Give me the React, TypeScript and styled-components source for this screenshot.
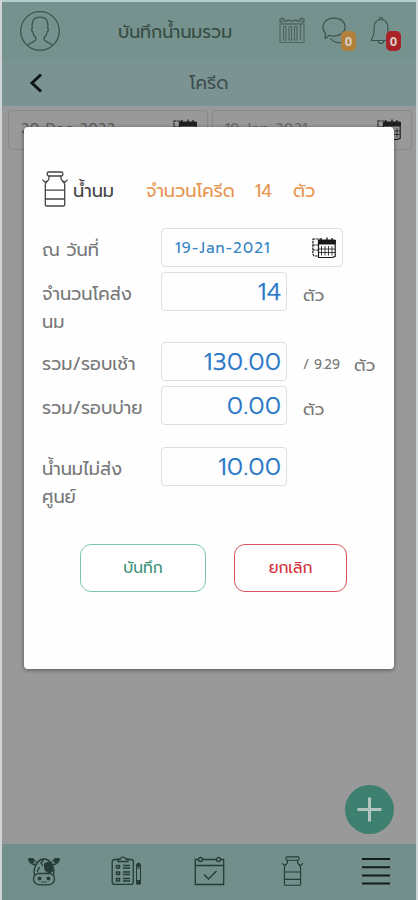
import React from "react";
import styled, { createGlobalStyle } from "styled-components";

const Global = createGlobalStyle`
  * { box-sizing: border-box; }
  html, body { margin: 0; padding: 0; background: #d9dedd; }
  body { font-family: "Prompt", "Kanit", "Noto Sans Thai", "Noto Sans", sans-serif; }
  button { font-family: inherit; }
`;

const Screen = styled.div`
  position: relative;
  width: 418px;
  height: 900px;
  overflow: hidden;
  display: flex;
  flex-direction: column;
  border: solid #cfd5d4;
  border-width: 0 2px;
  background: #999;
`;
const TopBar = styled.header`
  height: 60px;
  flex: none;
  border-top: 2px solid #b4cdca;
  background: #76928e;
  display: flex;
  align-items: center;
  padding: 0 24px 0 17px;
  color: #3d5350;
`;
const TopTitle = styled.div`
  flex: 1;
  padding: 2px 0 0 57px;
`;
const TopIcons = styled.div`
  display: flex;
  align-items: center;
  padding-bottom: 1px;
`;
const IconWrap = styled.div<{ $gap: number }>`
  position: relative;
  display: flex;
  margin-left: ${(p) => p.$gap}px;
`;
const Badge = styled.span<{ $bg: string; $right: number }>`
  position: absolute;
  right: ${(p) => p.$right}px;
  bottom: -6px;
  width: 15px;
  height: 20px;
  border-radius: 5px;
  background: ${(p) => p.$bg};
  color: #d9cdc2;
  font: 700 13px/20px "Open Sans", sans-serif;
  text-align: center;
`;
const SubBar = styled.div`
  height: 46px;
  flex: none;
  background: #7c9393;
  display: grid;
  grid-template-columns: 68px 1fr 68px;
  align-items: center;
  justify-items: center;
`;
const Filters = styled.div`
  display: flex;
  gap: 4px;
  padding: 4px 4px 0 6px;
  height: 48px;
`;
const FilterBox = styled.div`
  flex: 1;
  height: 40px;
  border: 1px solid #898989;
  border-radius: 4px;
  display: flex;
  justify-content: space-between;
  align-items: flex-start;
  padding: 8px 10px 0 12px;
`;
const Main = styled.main`
  flex: 1;
  display: flex;
  flex-direction: column;
  justify-content: space-between;
`;
const AddButton = styled.button`
  align-self: flex-end;
  margin: 0 22px 10px 0;
  width: 49px;
  height: 49px;
  border: 0;
  padding: 0;
  border-radius: 50%;
  background: #3d8070;
  display: grid;
  place-items: center;
`;
const BottomNav = styled.nav`
  height: 56px;
  flex: none;
  background: #738f8b;
  display: grid;
  grid-template-columns: repeat(5, 83px);
  align-items: center;
  justify-items: center;
  padding-bottom: 2px;
  color: #243b38;
`;
const Modal = styled.section`
  position: absolute;
  left: 22px;
  top: 127px;
  width: 370px;
  height: 542px;
  border-radius: 4px;
  background: #fefefe;
  box-shadow: 0 1px 4px rgba(0, 0, 0, 0.45);
  padding: 40px 14px 0 18px;
`;
const Heading = styled.div`
  display: flex;
  align-items: center;
  height: 48px;
  margin-bottom: 13px;
  color: #444;
`;
const CanSlot = styled.div`
  display: flex;
  padding-bottom: 4px;
`;
const HeadingText = styled.div<{ $left: number }>`
  margin-left: ${(p) => p.$left}px;
  padding-top: 2px;
`;
const Row = styled.div<{ $h: number }>`
  display: grid;
  grid-template-columns: 119px auto 1fr;
  align-items: start;
  height: ${(p) => p.$h}px;
`;
const Label = styled.div`
  padding-top: 9px;
`;
const Field = styled.div<{ $wide?: boolean }>`
  width: ${(p) => (p.$wide ? 182 : 126)}px;
  height: 39px;
  border: 1px solid #dedede;
  border-radius: 4px;
  display: flex;
  align-items: center;
  justify-content: ${(p) => (p.$wide ? "space-between" : "flex-end")};
  padding: ${(p) => (p.$wide ? "0 6px 0 13px" : "0 5px 0 0")};
`;
const Units = styled.div`
  display: flex;
  padding: 9px 0 0 16px;
`;
const PerHead = styled.div`
  width: 51px;
`;
const Text = styled.span<{ $size?: number; $color?: string; $ls?: number; $lh?: number; $weight?: number }>`
  display: block;
  white-space: pre;
  font-size: ${(p) => p.$size ?? 17.8}px;
  line-height: ${(p) => p.$lh ?? 28}px;
  color: ${(p) => p.$color ?? "#777"};
  letter-spacing: ${(p) => p.$ls ?? 0}px;
  font-weight: ${(p) => p.$weight ?? 400};
`;
const Amount = styled(Text).attrs({ $size: 24, $color: "#2877c7", $weight: 300 })`
  letter-spacing: 0.6px;
  margin-right: -0.6px;
  -webkit-text-stroke: 0.25px #2877c7;
`;
const Actions = styled.div`
  display: flex;
  gap: 28px;
  padding-left: 38px;
`;
const ActionButton = styled.button<{ $w: number; $line: string; $ink: string }>`
  width: ${(p) => p.$w}px;
  height: 48px;
  border: 1.5px solid ${(p) => p.$line};
  border-radius: 11px;
  background: #fff;
  color: ${(p) => p.$ink};
  font-size: 15.5px;
  font-weight: 400;
  padding: 0;
`;

const MilkCan = ({ w = 26, h = 36, sw = 1.3 }: { w?: number; h?: number; sw?: number }) => (
  <svg width={w} height={h} viewBox="0 0 26 36" fill="none" stroke="currentColor" strokeWidth={sw} strokeLinejoin="round" strokeLinecap="round">
    <rect x="5.2" y="1" width="15.6" height="4" rx="1.4" />
    <path d="M7 5v2.500c0 2.500-3.700 3-3.700 6V33.800c0 .8.4 1.200 1.200 1.200h17c.8 0 1.200-.4 1.200-1.200V13.500c0-3-3.700-3.500-3.700-6V5M3.300 19.200h19.400M3.300 28h19.400M5 10.200l-1.700.8C2 11 2 9.500.7 9M21 10.200l1.700.8c1.300 0 1.300-1.500 2.600-2" />
  </svg>
);

const Calendar = ({ color = "#181818", light = "#fff" }: { color?: string; light?: string }) => (
  <svg width="24" height="21" viewBox="0 0 24 21">
    <g stroke={color}>
      <path d="M1 2h7v17H2L.8 17zM1 8h6M1 13h6" fill="none" strokeWidth="1.2" strokeDasharray="2.5 .8" />
      <path d="M6.500 3.500h16.700v15.800l-3 1.200H6.500z" fill={light} strokeWidth="1.200" />
      <path d="M6.500 3h16.700v4H6.500z" fill={color} />
      <path d="M9 1v3M15 .5V4M20 1v3" strokeWidth="1.300" />
      <path d="M9.500 9v9.500M13 9v9.500M16.500 9v9.500M20 9v9.500M7 12h16M7 15.500h16" fill="none" strokeWidth=".8" />
    </g>
  </svg>
);

const BarCalendar = () => (
  <svg width="26" height="27" viewBox="0 0 26 27" fill="none" stroke="#50655f" strokeWidth="1.200" strokeLinejoin="round">
    <path d="M1 7v18.500h24V7" />
    <path d="M1.500 6.500L1 2.500 3.500 1l3 3.500L9.500 3l3.500 1.500L16.500 3l3 1.500 3-3.500L25 2.500l-.5 4M2 7h22M3.500 3.500v2M22.500 3.500v2" strokeWidth="1.700" />
    <path d="M4.500 9.500H7v13.500H4.500zM10 9.500h2.500v13.500H10zM15.500 9.500H18v13.500h-2.500zM21.500 8v15" />
  </svg>
);

const Person = () => (
  <svg width="42" height="42" viewBox="0 0 42 42" fill="none" stroke="currentColor" strokeWidth="1.3">
    <circle cx="21" cy="21" r="19.3" />
    <path d="M8.500 35.500c1.400-3.200 8.600-2.400 8.700-7.400-2-1.500-3-3.800-3.400-6.200-1.700-1.200-1.200-3.100-.5-3.700-.8-7 1.200-11 7.700-11s8.500 4 7.700 11c.7.6 1.200 2.500-.5 3.700-.4 2.400-1.400 4.700-3.400 6.200.1 5 7.300 4.200 8.700 7.400" />
  </svg>
);

const Chat = () => (
  <svg width="30" height="28" viewBox="0 0 30 28" fill="none" stroke="currentColor" strokeWidth="1.200" strokeLinejoin="round">
    <path d="M4.500 16.500C-1 10 3 1.200 12.800 1.200c7 0 11.400 4 11.400 9s-4.600 9-11.400 9c-1.800 0-3.400-.3-4.800-.9-1.200 1.700-2.700 2.600-4.400 2.800 1-1.200 1-2.600.9-4.600ZM9.500 21.500c2.500 4 8.500 5.200 12.500 3.500" />
  </svg>
);

const Bell = () => (
  <svg width="22" height="29" viewBox="0 0 24 29" preserveAspectRatio="none" fill="none" stroke="currentColor" strokeWidth="1.200" strokeLinejoin="round">
    <path d="M10 3.500a2 2 0 0 1 4 0M12 3.500c-5 0-7.500 3.500-7.500 8.500 0 6-1 9.500-3 11.500v1h21v-1c-2-2-3-5.500-3-11.500 0-5-2.500-8.500-7.500-8.500ZM9 24.500c0 4 6 4 6 0" />
  </svg>
);

const Cow = () => (
  <svg width="34" height="29" viewBox="0 0 34 29" fill="none" stroke="currentColor" strokeWidth="1.300" strokeLinejoin="round">
    <path d="M10 7C6 8.500 2.500 6.500 1.500 2c2.500-.8 6 .3 8 3.500M24 7c4 1.500 7.500-.5 8.500-5-2.500-.8-6 .3-8 3.500" />
    <path d="M2 2.300l4.500-.4L6 6zM32 2.300l-4.500-.4L28 6z" fill="currentColor" />
    <path d="M7.500 19c-.8-5-.3-9 2-12C11.500 3.500 14 2 17 2s5.500 1.500 7.500 5c2.300 3 2.800 7 2 12" />
    <path d="M17.500 7c3-2.500 6-1.500 7.500 1.500l.2 6-3.200 1.500-4-3.200z" fill="currentColor" />
    <path d="M17 2l-3 4 2 3M10 15l2.500-5" />
    <rect x="6.500" y="16.500" width="21" height="11.300" rx="5.600" />
    <circle cx="12.500" cy="21.500" r="1.300" fill="currentColor" />
    <circle cx="21.500" cy="21.500" r="1.300" fill="currentColor" />
    <path d="M14 25h6" strokeWidth=".8" />
  </svg>
);

const Clipboard = () => (
  <svg width="31" height="30" viewBox="0 0 31 30" fill="none" stroke="currentColor" strokeWidth="1.300" strokeLinejoin="round">
    <path d="M7 3.500H3.500c-1.500 0-2.300.8-2.300 2.300V26c0 1.500.8 2.300 2.300 2.300H20c1.500 0 2.300-.8 2.300-2.300V5.800c0-1.500-.8-2.300-2.300-2.300h-3.500M7 5.500V3h2.500c.5-2.600 4.500-2.600 5 0H17v2.500z" />
    <path d="M5.500 9.500h3v2.500h-3zM5.500 16h3v2.500h-3zM5.500 22.500h3V25h-3z" strokeWidth="1.500" />
    <path d="M12 9.500h7M12 12h7M12 16h7M12 18.500h7M12 22.500h7M12 25h7" />
    <path d="M25.500 8.500h4V28h-4zM25.500 12h4M25.500 24.500h4" strokeWidth="1" />
    <path d="M26.500 7.500h2v2.500h-2zM26 25.500h3v2h-3z" fill="currentColor" />
  </svg>
);

const CheckCalendar = () => (
  <svg width="31" height="30" viewBox="0 0 31 30" fill="none" stroke="currentColor" strokeWidth="1.300">
    <path d="M4.500 3.500H1.300v25h28.400v-25h-3.200M8.500 3.500h14M1.300 9.500h28.400M10 18.500l4.500 4.500 8-8" />
    <circle cx="6.500" cy="3.500" r="2" />
    <circle cx="24.500" cy="3.500" r="2" />
  </svg>
);

const Menu = () => (
  <svg width="28" height="29" viewBox="0 0 28 29" stroke="#111c1b" strokeWidth="2">
    <path d="M0 2h28M0 10.200h28M0 18.400h28M0 26.600h28" />
  </svg>
);

export default function App() {
  return (
    <>
      <Global />
      <Screen>
        <TopBar>
          <Person />
          <TopTitle><Text $size={17.4} $color="#354b42">บันทึกน้ำนมรวม</Text></TopTitle>
          <TopIcons>
            <BarCalendar />
            <IconWrap $gap={16}><Chat /><Badge $bg="#b1803b" $right={-5}>0</Badge></IconWrap>
            <IconWrap $gap={19}><Bell /><Badge $bg="#a82228" $right={-9}>0</Badge></IconWrap>
          </TopIcons>
        </TopBar>
        <SubBar>
          <svg width="14" height="20" viewBox="0 0 14 20" fill="none" stroke="#101616" strokeWidth="3"><path d="M12 1.500L3 10l9 8.500" /></svg>
          <Text $size={18} $color="#3c4f4d">โครีด</Text>
        </SubBar>
        <Main>
          <Filters>
            <FilterBox><Text $size={14} $color="#5c5c5c" $lh={20} $ls={0.5}>20-Dec-2022</Text><Calendar color="#202020" light="#999" /></FilterBox>
            <FilterBox><Text $size={14} $color="#686868" $lh={20} $ls={0.5}>19-Jan-2021</Text><Calendar color="#202020" light="#999" /></FilterBox>
          </Filters>
          <AddButton>
            <svg width="25" height="25" viewBox="0 0 25 25" stroke="#b3c4bf" strokeWidth="3"><path d="M0.500 12.500h24M12.500 .5v24" /></svg>
          </AddButton>
        </Main>
        <BottomNav>
          <Cow />
          <Clipboard />
          <CheckCalendar />
          <MilkCan w={23} h={30} />
          <Menu />
        </BottomNav>
        <Modal>
          <Heading>
            <CanSlot><MilkCan /></CanSlot>
            <HeadingText $left={5}><Text $color="#444">น้ำนม</Text></HeadingText>
            <HeadingText $left={32}><Text $color="#e8944e">จำนวนโครีด</Text></HeadingText>
            <HeadingText $left={20}><Text $color="#e8944e">14</Text></HeadingText>
            <HeadingText $left={21}><Text $color="#e8944e">ตัว</Text></HeadingText>
          </Heading>
          <Row $h={44}>
            <Label><Text>ณ วันที่</Text></Label>
            <Field $wide><Text $size={15} $color="#3585c5" $ls={1.15}>19-Jan-2021</Text><Calendar /></Field>
          </Row>
          <Row $h={70}>
            <Label><Text>{"จำนวนโคส่ง\nนม"}</Text></Label>
            <Field><Amount>14</Amount></Field>
            <Units><Text $size={17}>ตัว</Text></Units>
          </Row>
          <Row $h={44}>
            <Label><Text>รวม/รอบเช้า</Text></Label>
            <Field><Amount>130.00</Amount></Field>
            <Units><PerHead><Text $size={13}>/ 9.29</Text></PerHead><Text $size={17}>ตัว</Text></Units>
          </Row>
          <Row $h={61}>
            <Label><Text>รวม/รอบบ่าย</Text></Label>
            <Field><Amount>0.00</Amount></Field>
            <Units><Text $size={17}>ตัว</Text></Units>
          </Row>
          <Row $h={97}>
            <Label><Text>{"น้ำนมไม่ส่ง\nศูนย์"}</Text></Label>
            <Field><Amount>10.00</Amount></Field>
          </Row>
          <Actions>
            <ActionButton $w={126} $line="#7fc5ad" $ink="#3b9079">บันทึก</ActionButton>
            <ActionButton $w={113} $line="#d9545c" $ink="#d3303c">ยกเลิก</ActionButton>
          </Actions>
        </Modal>
      </Screen>
    </>
  );
}
